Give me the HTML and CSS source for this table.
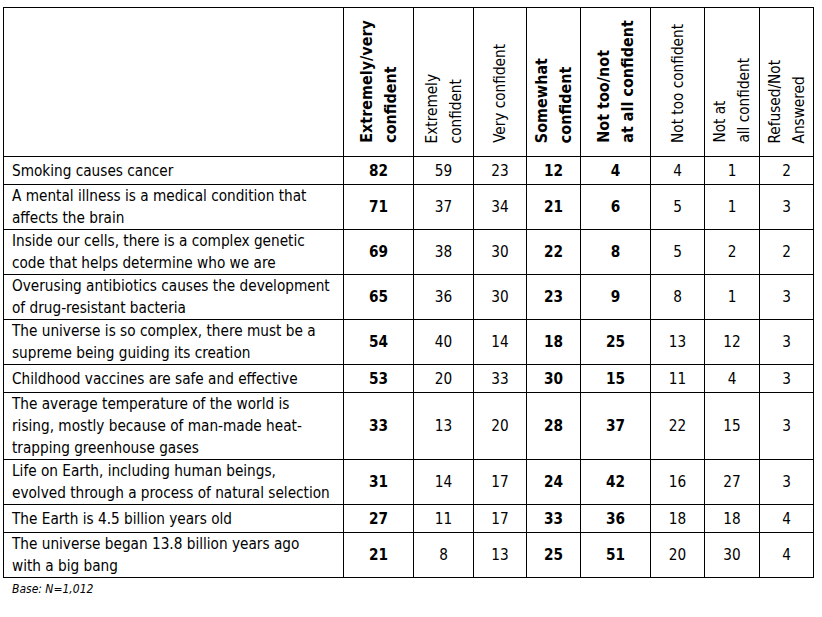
FILE: index.html
```html
<!DOCTYPE html>
<html lang="en">
<head>
<meta charset="utf-8">
<title>Confidence in statements</title>
<link rel="stylesheet" href="styles.css">
</head>
<body>
<div class="page">
  <table class="data">
    <colgroup>
      <col class="w-label">
      <col class="w70">
      <col class="w60">
      <col class="w53">
      <col class="w54">
      <col class="w70">
      <col class="w54">
      <col class="w55">
      <col class="w54">
    </colgroup>
    <thead>
      <tr class="head">
        <th class="blank"></th>
        <th class="b"><span class="rot">Extremely/very<br>confident</span></th>
        <th><span class="rot">Extremely<br>confident</span></th>
        <th><span class="rot">Very confident</span></th>
        <th class="b"><span class="rot">Somewhat<br>confident</span></th>
        <th class="b"><span class="rot">Not too/not<br>at all confident</span></th>
        <th><span class="rot">Not too confident</span></th>
        <th><span class="rot">Not at<br>all confident</span></th>
        <th><span class="rot">Refused/Not<br>Answered</span></th>
      </tr>
    </thead>
    <tbody>
      <tr class="one">
        <td class="label">Smoking causes cancer</td>
        <td class="b">82</td><td>59</td><td>23</td><td class="b">12</td><td class="b">4</td><td>4</td><td>1</td><td>2</td>
      </tr>
      <tr>
        <td class="label">A mental illness is a medical condition that<br>affects the brain</td>
        <td class="b">71</td><td>37</td><td>34</td><td class="b">21</td><td class="b">6</td><td>5</td><td>1</td><td>3</td>
      </tr>
      <tr>
        <td class="label">Inside our cells, there is a complex genetic<br>code that helps determine who we are</td>
        <td class="b">69</td><td>38</td><td>30</td><td class="b">22</td><td class="b">8</td><td>5</td><td>2</td><td>2</td>
      </tr>
      <tr>
        <td class="label">Overusing antibiotics causes the development<br>of drug-resistant bacteria</td>
        <td class="b">65</td><td>36</td><td>30</td><td class="b">23</td><td class="b">9</td><td>8</td><td>1</td><td>3</td>
      </tr>
      <tr>
        <td class="label">The universe is so complex, there must be a<br>supreme being guiding its creation</td>
        <td class="b">54</td><td>40</td><td>14</td><td class="b">18</td><td class="b">25</td><td>13</td><td>12</td><td>3</td>
      </tr>
      <tr class="one">
        <td class="label">Childhood vaccines are safe and effective</td>
        <td class="b">53</td><td>20</td><td>33</td><td class="b">30</td><td class="b">15</td><td>11</td><td>4</td><td>3</td>
      </tr>
      <tr>
        <td class="label">The average temperature of the world is<br>rising, mostly because of man-made heat-<br>trapping greenhouse gases</td>
        <td class="b">33</td><td>13</td><td>20</td><td class="b">28</td><td class="b">37</td><td>22</td><td>15</td><td>3</td>
      </tr>
      <tr>
        <td class="label">Life on Earth, including human beings,<br>evolved through a process of natural selection</td>
        <td class="b">31</td><td>14</td><td>17</td><td class="b">24</td><td class="b">42</td><td>16</td><td>27</td><td>3</td>
      </tr>
      <tr class="one">
        <td class="label">The Earth is 4.5 billion years old</td>
        <td class="b">27</td><td>11</td><td>17</td><td class="b">33</td><td class="b">36</td><td>18</td><td>18</td><td>4</td>
      </tr>
      <tr>
        <td class="label">The universe began 13.8 billion years ago<br>with a big bang</td>
        <td class="b">21</td><td>8</td><td>13</td><td class="b">25</td><td class="b">51</td><td>20</td><td>30</td><td>4</td>
      </tr>
    </tbody>
  </table>
  <p class="base">Base: N=1,012</p>
</div>
</body>
</html>
```

FILE: styles.css
```css
html, body {
  margin: 0;
  padding: 0;
  background: #ffffff;
}

body {
  font-family: "DejaVu Sans Condensed", "DejaVu Sans", sans-serif;
  font-stretch: condensed;
  color: #000000;
}

.page {
  padding: 7px 0 0 3px;
}

.data {
  border-collapse: collapse;
  table-layout: fixed;
  width: 811px;
  font-size: 15.2px;
  line-height: 22px;
}

.w-label { width: 340px; }
.w70 { width: 70px; }
.w60 { width: 60px; }
.w53 { width: 53px; }
.w54 { width: 54px; }
.w55 { width: 55px; }

.data th,
.data td {
  border: 1px solid #000000;
  padding: 0;
  text-align: center;
  vertical-align: middle;
  font-weight: normal;
}

.data .b {
  font-weight: bold;
}

.head th {
  height: 142px;
  vertical-align: bottom;
  padding-bottom: 6px;
  line-height: 24px;
}

.head th.b {
  font-size: 16px;
}

.rot {
  display: inline-block;
  writing-mode: vertical-rl;
  transform: rotate(180deg);
  text-align: left;
  white-space: nowrap;
}

.one td {
  height: 27px;
}

.data td.label {
  text-align: left;
  padding-left: 8px;
  white-space: nowrap;
}

.base {
  margin: 4px 0 0 9px;
  font-size: 12px;
  line-height: 14px;
  font-style: italic;
}
```
